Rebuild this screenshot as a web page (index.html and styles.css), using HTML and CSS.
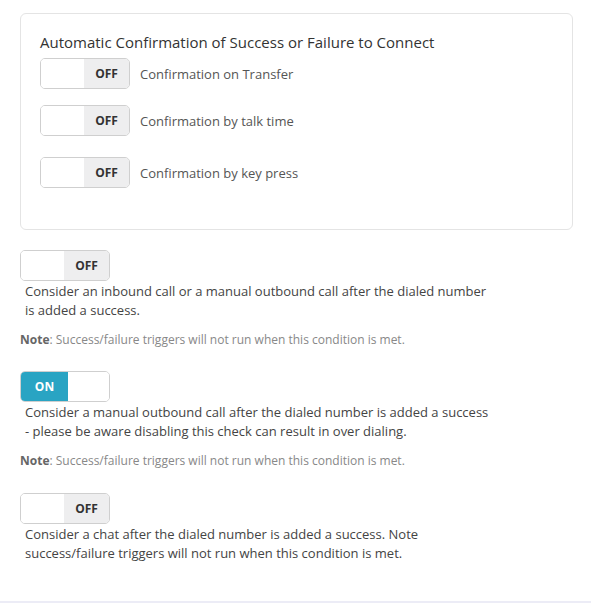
FILE: index.html
```html
<!DOCTYPE html>
<html lang="en">
  <head>
    <meta charset="UTF-8" />
    <meta name="viewport" content="width=device-width, initial-scale=1.0" />
    <title>Call Confirmation Settings</title>
    <link rel="stylesheet" href="styles.css">
  </head>
  <body>
    <div class="page">
      <div class="card">
        <h3 class="card-title">Automatic Confirmation of Success or Failure to Connect</h3>
        <div class="row row-first">
          <span class="toggle"><span class="knob"></span><span class="state">OFF</span></span>
          <span class="row-label">Confirmation on Transfer</span>
        </div>
        <div class="row row-second">
          <span class="toggle"><span class="knob"></span><span class="state">OFF</span></span>
          <span class="row-label">Confirmation by talk time</span>
        </div>
        <div class="row row-third">
          <span class="toggle"><span class="knob"></span><span class="state">OFF</span></span>
          <span class="row-label">Confirmation by key press</span>
        </div>
      </div>

      <div class="option option-inbound">
        <span class="toggle"><span class="knob"></span><span class="state">OFF</span></span>
        <p class="option-text">Consider an inbound call or a manual outbound call after the dialed number is added a success.</p>
        <p class="note"><b>Note</b>: Success/failure triggers will not run when this condition is met.</p>
      </div>

      <div class="option option-manual">
        <span class="toggle on"><span class="state">ON</span><span class="knob"></span></span>
        <p class="option-text">Consider a manual outbound call after the dialed number is added a success - please be aware disabling this check can result in over dialing.</p>
        <p class="note"><b>Note</b>: Success/failure triggers will not run when this condition is met.</p>
      </div>

      <div class="option option-chat">
        <span class="toggle"><span class="knob"></span><span class="state">OFF</span></span>
        <p class="option-text">Consider a chat after the dialed number is added a success. Note success/failure triggers will not run when this condition is met.</p>
      </div>
    </div>
  </body>
</html>
```

FILE: styles.css
```css
body {
  margin: 0;
  background-color: #fff;
  font-family: "Open Sans", "Liberation Sans", sans-serif;
  color: #444;
}
.page {
  height: 603px;
  padding: 13px 18px 0 20px;
  box-sizing: border-box;
  border-bottom: 2px solid #ececf6;
}
.card {
  border: 1px solid #e4e4e4;
  border-radius: 6px;
  padding: 18px 19px 41px;
}
.card-title {
  margin: 0;
  font-size: 15px;
  font-weight: 400;
  line-height: 20px;
  color: #333;
}
.row {
  display: flex;
  align-items: center;
  gap: 10px;
}
.row-first {
  margin-top: 6px;
}
.row-second {
  margin-top: 16px;
}
.row-third {
  margin-top: 21px;
}
.row-label {
  font-size: 13px;
  color: #555;
}
.toggle {
  display: inline-flex;
  width: 90px;
  height: 31px;
  box-sizing: border-box;
  border: 1px solid #cfcfcf;
  border-radius: 5px;
  overflow: hidden;
  vertical-align: top;
}
.knob {
  flex: 1;
  background-color: #fff;
}
.state {
  width: 45px;
  display: flex;
  align-items: center;
  justify-content: center;
  background-color: #eeeeef;
  font-size: 12px;
  font-weight: 700;
  color: #333;
}
.toggle.on .state {
  width: 47px;
  background-color: #29a4c3;
  color: #fff;
}
.option-inbound {
  margin-top: 20px;
}
.option-manual {
  margin-top: 22px;
}
.option-chat {
  margin-top: 23px;
}
.option-text {
  margin: 1px 0 0;
  padding-left: 5px;
  width: 470px;
  font-size: 13px;
  line-height: 19px;
  color: #444;
}
.note {
  margin: 11px 0 0;
  font-size: 12px;
  line-height: 18px;
  color: #888;
}
.note b {
  color: #666;
}
```
